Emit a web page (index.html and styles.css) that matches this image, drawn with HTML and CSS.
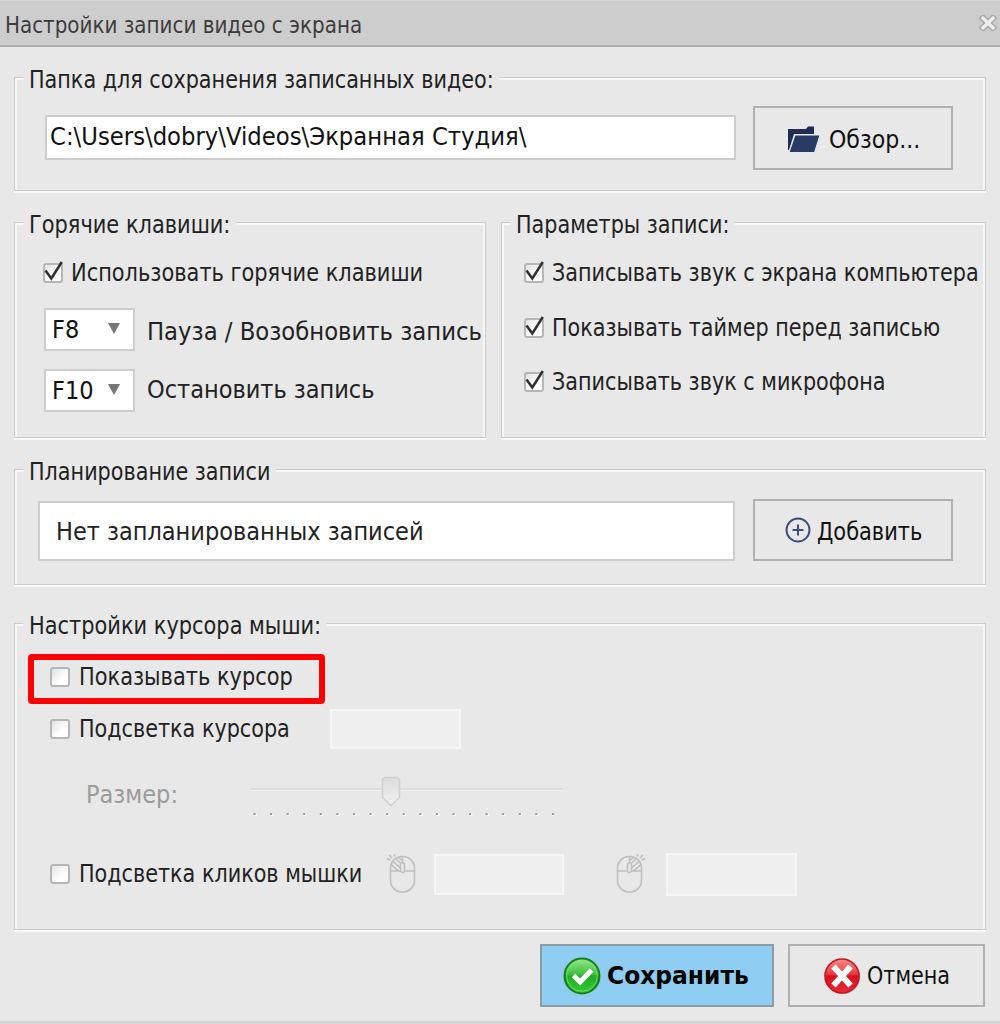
FILE: index.html
```html
<!DOCTYPE html>
<html lang="ru">
<head>
<meta charset="utf-8">
<title>Настройки записи видео с экрана</title>
<link rel="stylesheet" href="styles.css">
</head>
<body>
<svg class="defs" width="0" height="0" aria-hidden="true">
  <defs>
    <linearGradient id="green" x1="0" y1="0" x2="0" y2="1"><stop offset="0" stop-color="#9be58f"/><stop offset=".45" stop-color="#3cc23c"/><stop offset=".5" stop-color="#1fae22"/><stop offset="1" stop-color="#39c838"/></linearGradient>
    <linearGradient id="red" x1="0" y1="0" x2="0" y2="1"><stop offset="0" stop-color="#f58a8a"/><stop offset=".45" stop-color="#e83a40"/><stop offset=".5" stop-color="#d9101c"/><stop offset="1" stop-color="#ea2b35"/></linearGradient>
    <linearGradient id="thumb" x1="0" y1="0" x2="0" y2="1"><stop offset="0" stop-color="#dcdcdc"/><stop offset="1" stop-color="#f1f1f1"/></linearGradient>
    <symbol id="check" viewBox="0 0 20 22"><path d="M2.500 10.500 8.300 18.500 18.800 2" fill="none" stroke="#303030" stroke-width="2.500"/></symbol>
    <symbol id="mouse" viewBox="0 0 30 40">
      <g fill="none" stroke="#bfbfbf" stroke-width="1.600">
        <rect x="4.500" y="2.500" width="24" height="35.500" rx="11.500"/>
        <path d="M4.500 17H14M19 17h9.500M16.500 2.500V9"/>
        <rect x="14.500" y="9" width="4" height="9.500" rx="2"/>
        <path d="M5 10.500l7.500 6.500M6.500 7l8 7M9.500 4.500l5 4.500M12.500 3.500l4 3.500"/>
        <path d="M.8 4.500l3.500 1.500M3.500 1l2 3M8.500 0v2.500"/>
      </g>
    </symbol>
  </defs>
</svg>
<div class="window">
  <header class="titlebar">
    <h1 class="title">Настройки записи видео с экрана</h1>
    <svg class="close" width="18" height="16" viewBox="0 0 18 16"><path d="M4 3.200l10 9.600M14 3.200L4 12.800" stroke="#a6a6a6" stroke-width="6.200" stroke-linecap="square"/><path d="M4 3.200l10 9.600M14 3.200L4 12.800" stroke="#eee" stroke-width="3.400" stroke-linecap="square"/></svg>
  </header>
  <main class="content">
    <section class="group folder">
      <h2 class="legend">Папка для сохранения записанных видео:</h2>
      <div class="field path"><span class="text wide">C:\Users\dobry\Videos\Экранная Студия\</span></div>
      <button class="button browse">
        <svg width="34" height="28" viewBox="0 0 34 28"><path d="M1 3h18l2-2.500h6V8H7L2 24H1z" fill="#1f2d56"/><path d="M8 9h25L27.500 26.500H2z" fill="#293a66" stroke="#e8e8e8" stroke-width="1"/></svg>
        <span class="text near">Обзор...</span>
      </button>
    </section>
    <div class="columns">
      <section class="group hotkeys">
        <h2 class="legend looser">Горячие клавиши:</h2>
        <label class="option"><span class="box"><svg class="tick"><use href="#check"/></svg></span><span class="text narrow looser">Использовать горячие клавиши</span></label>
        <div class="key pause"><span class="select"><span>F8</span><i class="arrow"></i></span><span class="text wide">Пауза / Возобновить запись</span></div>
        <div class="key stop"><span class="select"><span>F10</span><i class="arrow"></i></span><span class="text">Остановить запись</span></div>
      </section>
      <section class="group params">
        <h2 class="legend">Параметры записи:</h2>
        <label class="option"><span class="box"><svg class="tick"><use href="#check"/></svg></span><span class="text narrow">Записывать звук с экрана компьютера</span></label>
        <label class="option"><span class="box"><svg class="tick"><use href="#check"/></svg></span><span class="text narrow">Показывать таймер перед записью</span></label>
        <label class="option"><span class="box"><svg class="tick"><use href="#check"/></svg></span><span class="text narrow">Записывать звук с микрофона</span></label>
      </section>
    </div>
    <section class="group plan">
      <h2 class="legend">Планирование записи</h2>
      <div class="field list"><span class="text">Нет запланированных записей</span></div>
      <button class="button add">
        <svg width="26" height="26" viewBox="0 0 26 26" fill="none" stroke="#3d4f78" stroke-width="2"><circle cx="13" cy="13" r="11.500"/><path d="M7.500 13h11M13 7.500v11"/></svg>
        <span class="text narrow looser">Добавить</span>
      </button>
    </section>
    <section class="group cursor">
      <h2 class="legend looser">Настройки курсора мыши:</h2>
      <label class="option marked"><span class="box"></span><span class="text narrow looser">Показывать курсор</span></label>
      <div class="row light">
        <label class="option"><span class="box"></span><span class="text narrow">Подсветка курсора</span></label>
        <span class="swatch sw1"></span>
      </div>
      <div class="row size">
        <span class="size-label">Размер:</span>
        <svg class="slider" width="314" height="44" viewBox="0 0 314 44">
          <path d="M1 14h312" stroke="#d9d9d9" stroke-width="1.500"/><path d="M1 15.500h312" stroke="#f2f2f2"/>
          <path d="M134.500 2.500h13l2 2v18l-8.500 8-8.500-8v-18z" fill="url(#thumb)" stroke="#cfcfcf" stroke-width="1.500"/>
          <path d="M4.500 40H304" stroke="#fafafa" stroke-width="2.500" stroke-dasharray="2.500 14.080"/>
          <path d="M3.500 39H304" stroke="#999" stroke-width="2" stroke-dasharray="2 14.580"/>
        </svg>
      </div>
      <div class="row clicks">
        <label class="option"><span class="box"></span><span class="text narrow">Подсветка кликов мышки</span></label>
        <svg class="mouse" width="30" height="40"><use href="#mouse"/></svg>
        <span class="swatch sw2"></span>
        <svg class="mouse flip" width="30" height="40"><use href="#mouse"/></svg>
        <span class="swatch sw3"></span>
      </div>
    </section>
    <footer class="actions">
      <button class="button save">
        <svg width="38" height="38" viewBox="0 0 38 38"><circle cx="19" cy="19" r="17.500" fill="url(#green)" stroke="#15811b" stroke-width="2"/><circle cx="19" cy="19" r="15.300" fill="none" stroke="#8be184" stroke-width="1" opacity=".7"/><path d="M10.500 18.500l6.700 6.500L28.500 13" fill="none" stroke="#fff" stroke-width="5"/></svg>
        <span class="text bold">Сохранить</span>
      </button>
      <button class="button cancel">
        <svg width="38" height="38" viewBox="0 0 38 38"><circle cx="20" cy="20" r="17.300" fill="#bbb"/><circle cx="19" cy="19" r="17" fill="url(#red)" stroke="#bd1820" stroke-width="1.600"/><path d="M10.500 9.500l17 19M27.500 9.500l-17 19" stroke="#fff" stroke-width="6"/></svg>
        <span class="text narrow">Отмена</span>
      </button>
    </footer>
  </main>
</div>
</body>
</html>
```
FILE: styles.css
```css
* { box-sizing: border-box; }
body { margin: 0; background: #e8e8e8; color: #222; font: 25px/30px "DejaVu Sans Condensed", "DejaVu Sans", sans-serif; font-stretch: condensed; white-space: nowrap; }
h1, h2 { margin: 0; font-size: inherit; font-weight: 400; }
.defs { display: block; }
svg { flex: none; display: block; }
.window { width: 1000px; height: 1024px; overflow: hidden; background: #e8e8e8; border-bottom: 3px solid #d4d4d4; }
.titlebar { height: 47px; display: flex; justify-content: space-between; align-items: flex-start; padding: 9px 3px 0 5px; background: #cdcdcd; border-top: 1px solid #d8d8d8; border-bottom: 2px solid #adadad; }
.title { font-size: 23px; color: #3c3c3c; transform: scaleX(.962); transform-origin: 0 50%; }
.close { margin-top: 5px; }
.content { padding: 30px 14px 0; }

/* Group boxes with an etched edge */
.group { border: 1px solid #cbcbcb; box-shadow: inset 2px 2px 0 #f7f7f7, inset -2px 0 0 #f7f7f7, 0 2px 0 #f9f9f9; }
.legend { width: max-content; margin: -13px 0 0 8px; padding: 0 6px; background: #e8e8e8; transform: scaleX(.922); transform-origin: 6px 50%; }
.field { display: flex; align-items: center; background: #fff; border: 2px solid #cdcdcd; }
.button { display: flex; align-items: center; justify-content: flex-start; margin: 0; padding: 0; border: 2px solid #b0b0b0; background: #e8e8e8; color: #111; font: inherit; }

/* Label widths */
.text { flex: none; transform-origin: 0 50%; }
.narrow { transform: scaleX(.922); }
.looser { transform: scaleX(.93); }
.near { transform: scaleX(.98); }
.wide { transform: scaleX(1.012); }
.bold { transform: scaleX(1.04); }

.folder, .plan { display: grid; grid-template-columns: 1fr 200px; column-gap: 17px; align-items: start; align-content: start; padding-right: 32px; }
.folder .legend, .plan .legend { grid-column: 1 / -1; }
.folder { height: 114px; }
.path { height: 45px; margin: 20px 0 0 30px; padding: 0 0 2px 3px; color: #111; }
.browse { height: 64px; margin-top: 11px; padding-left: 32px; gap: 8px; padding-top: 3px; }

.columns { display: grid; grid-template-columns: 472px 485px; gap: 15px; margin-top: 31px; }
.hotkeys, .params { height: 216px; }
.option { display: flex; align-items: center; gap: 8px; height: 30px; }
.box { position: relative; flex: none; width: 20px; height: 20px; border: 2px solid #b6b6b6; border-radius: 3px; background: linear-gradient(135deg, #e2e2e2, #fff 65%); }
.tick { position: absolute; left: -2px; top: -5px; width: 20px; height: 22px; }
.hotkeys .option { margin: 18px 0 20px 28px; }
.key { display: flex; align-items: center; gap: 12px; height: 43px; margin: 0 0 18px 29px; }
.pause .text { padding-top: 4px; }
.stop .text { padding-bottom: 2px; }
.select { width: 91px; height: 43px; flex: none; display: flex; align-items: center; justify-content: space-between; padding: 0 13px 0 6px; border: 2px solid #cdcdcd; background: #fff; color: #111; }
.arrow { border: solid transparent; border-width: 11px 6px 0; border-top-color: #777; margin-top: -2px; }
.params .option { margin: 0 0 24.5px 22px; }
.params .legend { margin-bottom: 18px; }

.plan { height: 116px; margin-top: 31px; }
.list { height: 60px; margin: 14px 1px 0 23px; padding: 1px 0 0 16px; }
.add { height: 62px; margin-top: 12px; padding-left: 30px; gap: 6px; }
.add .text { padding-top: 3px; }

.cursor { height: 307px; margin-top: 38px; }
.marked { width: 297px; height: 50px; margin: 13px 0 0 13px; padding: 0 0 4px 16px; border: 6px solid #fe0000; border-radius: 4px; }
.row { display: flex; align-items: center; }
.cursor .option { gap: 9px; }
.light { height: 40px; margin: 5px 0 0 35px; }
.light .option { width: 280px; }
.swatch { flex: none; background: #efefef; border: 2px solid #f5f5f5; }
.sw1 { width: 131px; height: 40px; }
.size { height: 44px; margin: 26px 0 0 71px; color: #9b9b9b; align-items: flex-start; }
.size-label { width: 164px; margin-top: 5px; }
.clicks { height: 43px; margin: 34px 0 0 35px; }
.clicks .option { width: 336px; margin-top: -2px; }
.mouse { margin-top: -2px; }
.sw2 { width: 130px; height: 41px; margin-left: 18px; }
.flip { transform: scaleX(-1); margin-left: 52px; }
.sw3 { width: 131px; height: 43px; margin-left: 20px; }

.actions { display: flex; justify-content: flex-end; gap: 14px; margin-top: 14px; padding-right: 1px; }
.actions .button { height: 63px; }
.save { width: 234px; padding-left: 21px; gap: 6px; background: #8fcdf2; border-color: #8d9ba3; font-weight: 700; color: #000; }
.cancel { width: 197px; padding-left: 33px; gap: 6px; }
```
